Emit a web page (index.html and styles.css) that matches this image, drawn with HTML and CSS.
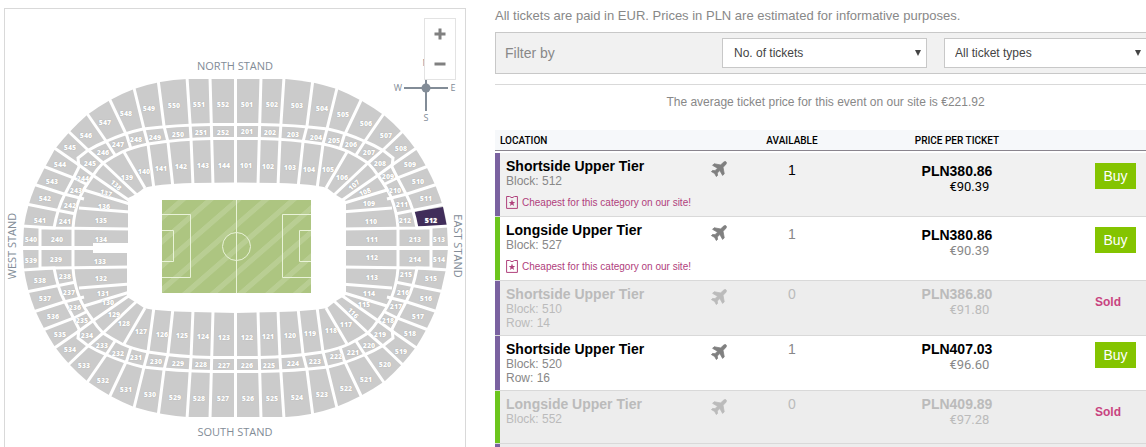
FILE: index.html
```html
<!DOCTYPE html>
<html lang="en">
<head>
    <meta charset="UTF-8">
    <meta name="viewport" content="width=device-width, initial-scale=1.0">
    <title>Tickets</title>
    <link rel="stylesheet" href="styles.css">
</head>
<body>

    <div class="page">

        <!-- Stadium Map -->
        <div class="map">
            <svg class="stadium" viewBox="5 9 460 438">
                <defs>
                    <pattern id="grass" width="27.7" height="93" patternUnits="userSpaceOnUse" patternTransform="translate(182 293) skewX(-49)">
                        <rect width="27.7" height="93" fill="#adc581"/>
                        <rect width="8" height="93" fill="#b9ce93"/>
                    </pattern>
                    <!-- one quarter of the aisles, mirrored for the rest -->
                    <g id="aisles">
                        <path d="M235.5 124.5H212Q176 125 143 129Q125 133 107 141Q97 145 87 151L78 158L79 167L74 177L64 196Q58 207 54 228H40V248"/>
                        <path d="M235.5 138.500H212Q180 139 148 144Q133 147 122 152Q112 157 103 163Q97 169 92 177Q84 188 80 197Q74 212 73 228V248"/>
                        <path d="M235.500 76V184M210 77L213 185M187 77L191 138L193 186M158 79L164 126L168 142L173 188M133 84L144 129L148 144L154 189M108 96L127 136L131 149M124 152L145 188M86 112L106 141L115 155M102 162L137 195M67 130L88 150L103 163M53 147L79 165L94 176L130 201M40 165L74 178L88 185M84 190L130 204M33 184L64 194L84 199M79 208L130 212M26 204L76 214M22 226L54 228L130 229M22 248.500H130"/>
                    </g>
                </defs>

                <path class="seats" d="M187 79H286Q312 81 337 89Q362 99 385 116Q402 130 417 151Q428 168 436 187Q445 209 447 226L448 248L446 269Q442 290 435 311Q427 330 416 347Q402 366 385 381Q362 397 336 407Q310 416 286 417H187Q160 415 134 407Q109 397 87 381Q69 366 55 347Q44 330 35 310Q27 290 24 269L23 248L24 226Q27 206 35 187Q44 168 55 149Q69 131 87 115Q110 98 134 89Q160 80 187 79Z"/>
                <path class="block-selected" d="M414 212L443 207L447 227L418 228Z"/>
                <g class="aisles">
                    <use href="#aisles"/>
                    <use href="#aisles" transform="matrix(-1 0 0 1 471 0)"/>
                    <use href="#aisles" transform="matrix(1 0 0 -1 0 496)"/>
                    <use href="#aisles" transform="matrix(-1 0 0 -1 471 496)"/>
                </g>
                <path fill="#fff" d="M93 243H128V198Q136 195 144 188Q156 184 193 183L236 182.500L278 183Q315 184 327 188Q335 195 346 201V295Q336 300 327 308Q310 311 278 312L236 313L193 312Q156 311 144 308Q134 301 127 297V253H93Z"/>

                <!-- Pitch -->
                <rect x="162" y="200" width="149" height="93" fill="url(#grass)"/>
                <path class="pitch-line" d="M236.500 200V293M162 214.500H190.500V277.500H162M162 230.500H173.500V261.500H162M311 214.500H282.500V277.500H311M311 230.500H299.500V261.500H311"/>
                <circle class="pitch-line" cx="236.500" cy="246.500" r="14"/>

                <!-- Block numbers -->
                <g class="blocks">
                    <text x="247" y="104">501</text><text x="272" y="104">502</text><text x="297" y="105">503</text><text x="322" y="108">504</text>
                    <text x="343" y="114">505</text><text x="366" y="123">506</text><text x="386" y="135">507</text><text x="401" y="148">508</text>
                    <text x="410" y="164">509</text><text x="418" y="181">510</text><text x="426" y="198">511</text><text x="431" y="220">512</text>
                    <text x="439" y="239">513</text><text x="439" y="259">514</text><text x="431" y="278">515</text><text x="426" y="298">516</text>
                    <text x="418" y="316">517</text><text x="410" y="333">518</text><text x="401" y="351">519</text><text x="385" y="364">520</text>
                    <text x="366" y="379">521</text><text x="346" y="388">522</text><text x="322" y="394">523</text><text x="297" y="397">524</text>
                    <text x="272" y="398">525</text><text x="248" y="398">526</text><text x="223" y="398">527</text><text x="199" y="398">528</text>
                    <text x="175" y="397">529</text><text x="150" y="394">530</text><text x="126" y="389">531</text><text x="103" y="380">532</text>
                    <text x="84" y="365">533</text><text x="70" y="349">534</text><text x="60" y="334">535</text><text x="53" y="316">536</text>
                    <text x="45" y="298">537</text><text x="40" y="280">538</text><text x="31" y="260">539</text><text x="31" y="239">540</text>
                    <text x="40" y="220">541</text><text x="45" y="198">542</text><text x="52" y="181">543</text><text x="60" y="164">544</text>
                    <text x="70" y="147">545</text><text x="86" y="135">546</text><text x="105" y="122">547</text><text x="126" y="113">548</text>
                    <text x="149" y="108">549</text><text x="174" y="105">550</text><text x="199" y="104">551</text><text x="223" y="104">552</text>

                    <text x="247" y="131">201</text><text x="270" y="132">202</text><text x="293" y="134">203</text><text x="316" y="137">204</text>
                    <text x="334" y="140">205</text><text x="351" y="144">206</text><text x="369" y="152">207</text><text x="380" y="163">208</text>
                    <text x="388" y="176">209</text><text x="395" y="190">210</text><text x="402" y="204">211</text><text x="405" y="220">212</text>
                    <text x="415" y="239">213</text><text x="415" y="259">214</text><text x="406" y="274">215</text><text x="403" y="292">216</text>
                    <text x="396" y="306">217</text><text x="388" y="320">218</text><text x="380" y="334">219</text><text x="369" y="345">220</text>
                    <text x="353" y="352">221</text><text x="336" y="356">222</text><text x="315" y="361">223</text><text x="293" y="363">224</text>
                    <text x="269" y="365">225</text><text x="247" y="365">226</text><text x="224" y="365">227</text><text x="201" y="364">228</text>
                    <text x="178" y="363">229</text><text x="156" y="361">230</text><text x="136" y="357">231</text><text x="118" y="353">232</text>
                    <text x="102" y="345">233</text><text x="87" y="335">234</text><text x="82" y="320">235</text><text x="75" y="307">236</text>
                    <text x="69" y="292">237</text><text x="65" y="276">238</text><text x="56" y="259">239</text><text x="57" y="239">240</text>
                    <text x="65" y="221">241</text><text x="70" y="205">242</text><text x="76" y="190">243</text><text x="83" y="178">244</text>
                    <text x="90" y="163">245</text><text x="103" y="152">246</text><text x="118" y="144">247</text><text x="136" y="139">248</text>
                    <text x="155" y="137">249</text><text x="178" y="134">250</text><text x="201" y="132">251</text><text x="223" y="132">252</text>

                    <text x="246" y="165">101</text><text x="268" y="166">102</text><text x="290" y="167">103</text><text x="309" y="169">104</text>
                    <text x="328" y="169">105</text><text x="342" y="177">106</text><text x="354" y="185" transform="rotate(-42 354 185)">107</text>
                    <text x="365" y="192" transform="rotate(-22 365 192)">108</text><text x="369" y="203">109</text><text x="371" y="221">110</text>
                    <text x="372" y="239">111</text><text x="372" y="257">112</text><text x="372" y="277">113</text><text x="369" y="293">114</text>
                    <text x="364" y="304">115</text><text x="353" y="313" transform="rotate(45 353 313)">116</text><text x="346" y="324">117</text>
                    <text x="331" y="330">118</text><text x="310" y="333">119</text><text x="290" y="335">120</text><text x="268" y="336">121</text>
                    <text x="247" y="337">122</text><text x="224" y="337">123</text><text x="203" y="336">124</text><text x="182" y="335">125</text>
                    <text x="162" y="334">126</text><text x="141" y="331">127</text><text x="124" y="323">128</text><text x="114" y="314">129</text>
                    <text x="108" y="302">130</text><text x="103" y="293">131</text><text x="101" y="278">132</text><text x="100" y="261">133</text>
                    <text x="101" y="239">134</text><text x="101" y="220">135</text><text x="104" y="206">136</text>
                    <text x="106" y="193" transform="rotate(15 106 193)">137</text><text x="116" y="185" transform="rotate(42 116 185)">138</text>
                    <text x="127" y="177">139</text><text x="144" y="171">140</text><text x="161" y="168">141</text><text x="181" y="166">142</text>
                    <text x="203" y="165">143</text><text x="224" y="165">144</text>
                </g>

                <g class="stands">
                    <text x="235" y="65">NORTH STAND</text>
                    <text x="235" y="431">SOUTH STAND</text>
                    <text x="11" y="246" transform="rotate(-90 11 246)">WEST STAND</text>
                    <text x="458" y="246" transform="rotate(90 458 246)">EAST STAND</text>
                </g>

                <!-- Compass -->
                <path d="M404 88H448M426 64V111" stroke="#828c97" stroke-width="2"/>
                <circle cx="426" cy="88" r="4.500" fill="#828c97"/>
                <g class="compass">
                    <text x="426" y="62">N</text>
                    <text x="398" y="87">W</text>
                    <text x="453" y="87">E</text>
                    <text x="426" y="117">S</text>
                </g>
            </svg>

            <div class="zoom">
                <button type="button" aria-label="Zoom in">
                    <svg width="12" height="12" viewBox="0 0 12 12"><path d="M6 0.500V11.500M0.500 6H11.500" stroke="#808080" stroke-width="3"/></svg>
                </button>
                <button type="button" aria-label="Zoom out">
                    <svg width="12" height="12" viewBox="0 0 12 12"><path d="M0.500 6H11.500" stroke="#808080" stroke-width="3"/></svg>
                </button>
            </div>
        </div>

        <!-- Ticket List -->
        <div class="tickets">
            <p class="notice">All tickets are paid in EUR. Prices in PLN are estimated for informative purposes.</p>

            <form class="filter">
                <span class="filter-label">Filter by</span>
                <div class="select">
                    <select aria-label="Number of tickets"><option>No. of tickets</option></select>
                </div>
                <div class="select select-last">
                    <select aria-label="Ticket type"><option>All ticket types</option></select>
                </div>
            </form>

            <p class="average">The average ticket price for this event on our site is €221.92</p>

            <svg class="symbols" width="0" height="0">
                <symbol id="plane" viewBox="0 0 24 24">
                    <path transform="rotate(45 12 12)" stroke-width="1" d="M21.500 16.500V13.500L14.200 8.500V3.500C14.200 2 13 0.500 12 0.500S9.800 2 9.800 3.500V8.500L2.500 13.500V16.500L9.800 14.500V19.300L7.300 21.300V23.500L12 22.200L16.700 23.500V21.300L14.200 19.300V14.500Z"/>
                </symbol>
                <symbol id="ticket" viewBox="0 0 12 14">
                    <path d="M3.500 1.500H0.600V13.400H11.400V1.500H8.500Q6 4 3.500 1.500Z" fill="none" stroke="#b0407c" stroke-width="1"/>
                    <path d="M6 4.600L6.900 6.900L9.200 7L7.400 8.500L8.100 10.900L6 9.500L3.900 10.900L4.600 8.500L2.800 7L5.100 6.900Z" fill="#b0407c"/>
                </symbol>
            </svg>

            <table>
                <colgroup>
                    <col>
                    <col class="col-plane">
                    <col class="col-available">
                    <col class="col-price">
                    <col class="col-action">
                </colgroup>
                <thead>
                    <tr>
                        <th class="left">Location</th>
                        <th></th>
                        <th>Available</th>
                        <th>Price per ticket</th>
                        <th></th>
                    </tr>
                </thead>
                <tbody>
                    <tr class="spacer"><td colspan="5"></td></tr>
                    <tr class="short cheapest active">
                        <td class="location">
                            <strong>Shortside Upper Tier</strong>
                            <span>Block: 512</span>
                            <em><svg width="12" height="14"><use href="#ticket"/></svg>Cheapest for this category on our site!</em>
                        </td>
                        <td class="plane"><svg width="18" height="18"><use href="#plane"/></svg></td>
                        <td class="available">1</td>
                        <td class="price"><div><b>PLN380.86</b><span>€90.39</span></div></td>
                        <td class="action"><button type="button" class="buy">Buy</button></td>
                    </tr>
                    <tr class="long cheapest">
                        <td class="location">
                            <strong>Longside Upper Tier</strong>
                            <span>Block: 527</span>
                            <em><svg width="12" height="14"><use href="#ticket"/></svg>Cheapest for this category on our site!</em>
                        </td>
                        <td class="plane"><svg width="18" height="18"><use href="#plane"/></svg></td>
                        <td class="available">1</td>
                        <td class="price"><div><b>PLN380.86</b><span>€90.39</span></div></td>
                        <td class="action"><button type="button" class="buy">Buy</button></td>
                    </tr>
                    <tr class="short sold">
                        <td class="location">
                            <strong>Shortside Upper Tier</strong>
                            <span>Block: 510</span>
                            <span>Row: 14</span>
                        </td>
                        <td class="plane"><svg width="18" height="18"><use href="#plane"/></svg></td>
                        <td class="available">0</td>
                        <td class="price"><div><b>PLN386.80</b><span>€91.80</span></div></td>
                        <td class="action">Sold</td>
                    </tr>
                    <tr class="short">
                        <td class="location">
                            <strong>Shortside Upper Tier</strong>
                            <span>Block: 520</span>
                            <span>Row: 16</span>
                        </td>
                        <td class="plane"><svg width="18" height="18"><use href="#plane"/></svg></td>
                        <td class="available">1</td>
                        <td class="price"><div><b>PLN407.03</b><span>€96.60</span></div></td>
                        <td class="action"><button type="button" class="buy">Buy</button></td>
                    </tr>
                    <tr class="long sold">
                        <td class="location">
                            <strong>Longside Upper Tier</strong>
                            <span>Block: 552</span>
                        </td>
                        <td class="plane"><svg width="18" height="18"><use href="#plane"/></svg></td>
                        <td class="available">0</td>
                        <td class="price"><div><b>PLN409.89</b><span>€97.28</span></div></td>
                        <td class="action">Sold</td>
                    </tr>
                    <tr class="short sold next"><td colspan="5"></td></tr>
                </tbody>
            </table>
        </div>

    </div>

</body>
</html>
```
FILE: styles.css
```css
* {
    box-sizing: border-box;
}

body {
    margin: 0;
    background-color: #fff;
    font-family: "Liberation Sans", Arial, sans-serif;
    font-size: 12px;
    color: #888;
    overflow: hidden;
}

p {
    margin: 0;
}

.page {
    display: grid;
    grid-template-columns: 462px 1fr;
    gap: 29px;
    padding: 8px 0 0 4px;
}

/* Map */
.map {
    position: relative;
    border: 1px solid #d9d9d9;
    border-bottom: none;
}

.stadium {
    display: block;
    width: 100%;
}

.seats { fill: #cbcbcb; }
.block-selected { fill: #402d5a; }

.aisles {
    fill: none;
    stroke: #fff;
    stroke-width: 3;
}

.pitch-line {
    fill: none;
    stroke: #e9f3d8;
    stroke-width: 1;
}

.stadium text {
    font-family: "Open Sans", sans-serif;
    text-anchor: middle;
    dominant-baseline: central;
}

.blocks {
    font-size: 7px;
    font-weight: 800;
    fill: #fff;
    text-shadow: 0 0 1px #999;
}

.stands {
    font-size: 11px;
    fill: #828c97;
}

.compass {
    font-size: 9px;
    fill: #828c97;
}

.zoom {
    position: absolute;
    top: 9px;
    right: 9px;
    display: flex;
    flex-direction: column;
    width: 32px;
    background-color: #fff;
    border: 1px solid #e3e3e3;
}

.zoom button {
    height: 30px;
    padding: 0;
    border: none;
    background: none;
    line-height: 0;
}

/* Filter */
.notice {
    font-size: 13px;
    line-height: 16px;
}

.filter {
    display: flex;
    align-items: center;
    height: 42px;
    margin-top: 8px;
    padding-left: 9px;
    background-color: #f1f1f1;
    border: 1px solid #c8c8c8;
    border-right: none;
}

.filter-label {
    flex: 1;
    font-size: 14px;
}

.select {
    position: relative;
    width: 205px;
    margin-right: 17px;
}

.select::after {
    content: "";
    position: absolute;
    top: 12px;
    right: 6px;
    border: 3px solid transparent;
    border-top: 6px solid #444;
    border-bottom: none;
    pointer-events: none;
}

.select-last {
    width: 202px;
    margin-right: 0;
}

.select-last::after {
    right: 5px;
}

select {
    display: block;
    width: 100%;
    height: 30px;
    padding: 0 11px;
    appearance: none;
    background-color: #fff;
    border: 1px solid #c8c8c8;
    border-radius: 0;
    font: 12px "Liberation Sans", Arial, sans-serif;
    color: #444;
}

.select-last select {
    border-right: none;
    padding-left: 10px;
}

.average {
    margin-top: 10px;
    padding: 10px 0 20px 10px;
    border-top: 1px solid #d9d9d9;
    text-align: center;
    line-height: 15px;
}

.symbols {
    position: absolute;
}

/* Table */
table {
    width: 100%;
    table-layout: fixed;
    border-collapse: separate;
    border-spacing: 0;
}

.col-plane { width: 38px; }
.col-available { width: 108px; }
.col-price { width: 222px; }
.col-action { width: 78px; }

th {
    height: 21px;
    padding: 0;
    background-color: #f6f8fa;
    border-bottom: 1px solid #8a858e;
    font: 500 10px Roboto, sans-serif;
    color: #000;
    text-transform: uppercase;
}

.left {
    padding-left: 5px;
    text-align: left;
}

td {
    padding: 5px 0 0;
    border-bottom: 1px solid #d9d9d9;
    vertical-align: top;
}

.spacer td {
    height: 2px;
    padding: 0;
    border-bottom: none;
}

/* Category Stripe */
.short td:first-child { box-shadow: inset 5px 0 #7a62a0; }
.long td:first-child { box-shadow: inset 5px 0 #6cc51d; }

.active,
.active .price span {
    color: #000;
}

.active { background-color: #f1f1f1; }
.sold { background-color: #ededed; }

.location {
    height: 53px;
    padding: 5px 0 5px 11px;
    color: #888;
}

.cheapest .location {
    padding-bottom: 0;
}

.location strong {
    display: block;
    font-size: 14px;
    line-height: 16px;
    color: #000;
}

.location span {
    display: block;
    line-height: 14px;
}

.location em {
    display: flex;
    align-items: center;
    gap: 4px;
    height: 28px;
    font-size: 10px;
    font-style: normal;
    color: #b0407c;
}

.plane {
    padding: 6px 0 0 1px;
    text-align: center;
    fill: #808080;
    stroke: #808080;
}

.available {
    font-size: 14px;
    text-align: center;
}

.price {
    padding-top: 6px;
    text-align: center;
}

.cheapest .available {
    padding-top: 9px;
}

.cheapest .price {
    padding-top: 11px;
}

.price div {
    display: inline-block;
    text-align: right;
}

.price b {
    display: block;
    font-size: 14px;
    line-height: 15px;
    color: #000;
}

.price span {
    display: block;
    padding-right: 3px;
    font: 13px/15px Roboto, sans-serif;
}

.action {
    padding: 6px 0 0 27px;
}

.cheapest .action {
    padding-top: 10px;
}

.buy {
    display: block;
    width: 41px;
    height: 26px;
    padding: 0;
    background-color: #84c400;
    border: none;
    font: 14px "Liberation Sans", Arial, sans-serif;
    color: #fff;
}

.sold td,
.sold strong,
.sold b {
    color: #bbb;
}

.sold .plane {
    fill: #bbb;
    stroke: #bbb;
}

.sold .action {
    padding-top: 14px;
    font-weight: bold;
    color: #c8437f;
}

.next td {
    height: 4px;
    padding: 0;
}
```
